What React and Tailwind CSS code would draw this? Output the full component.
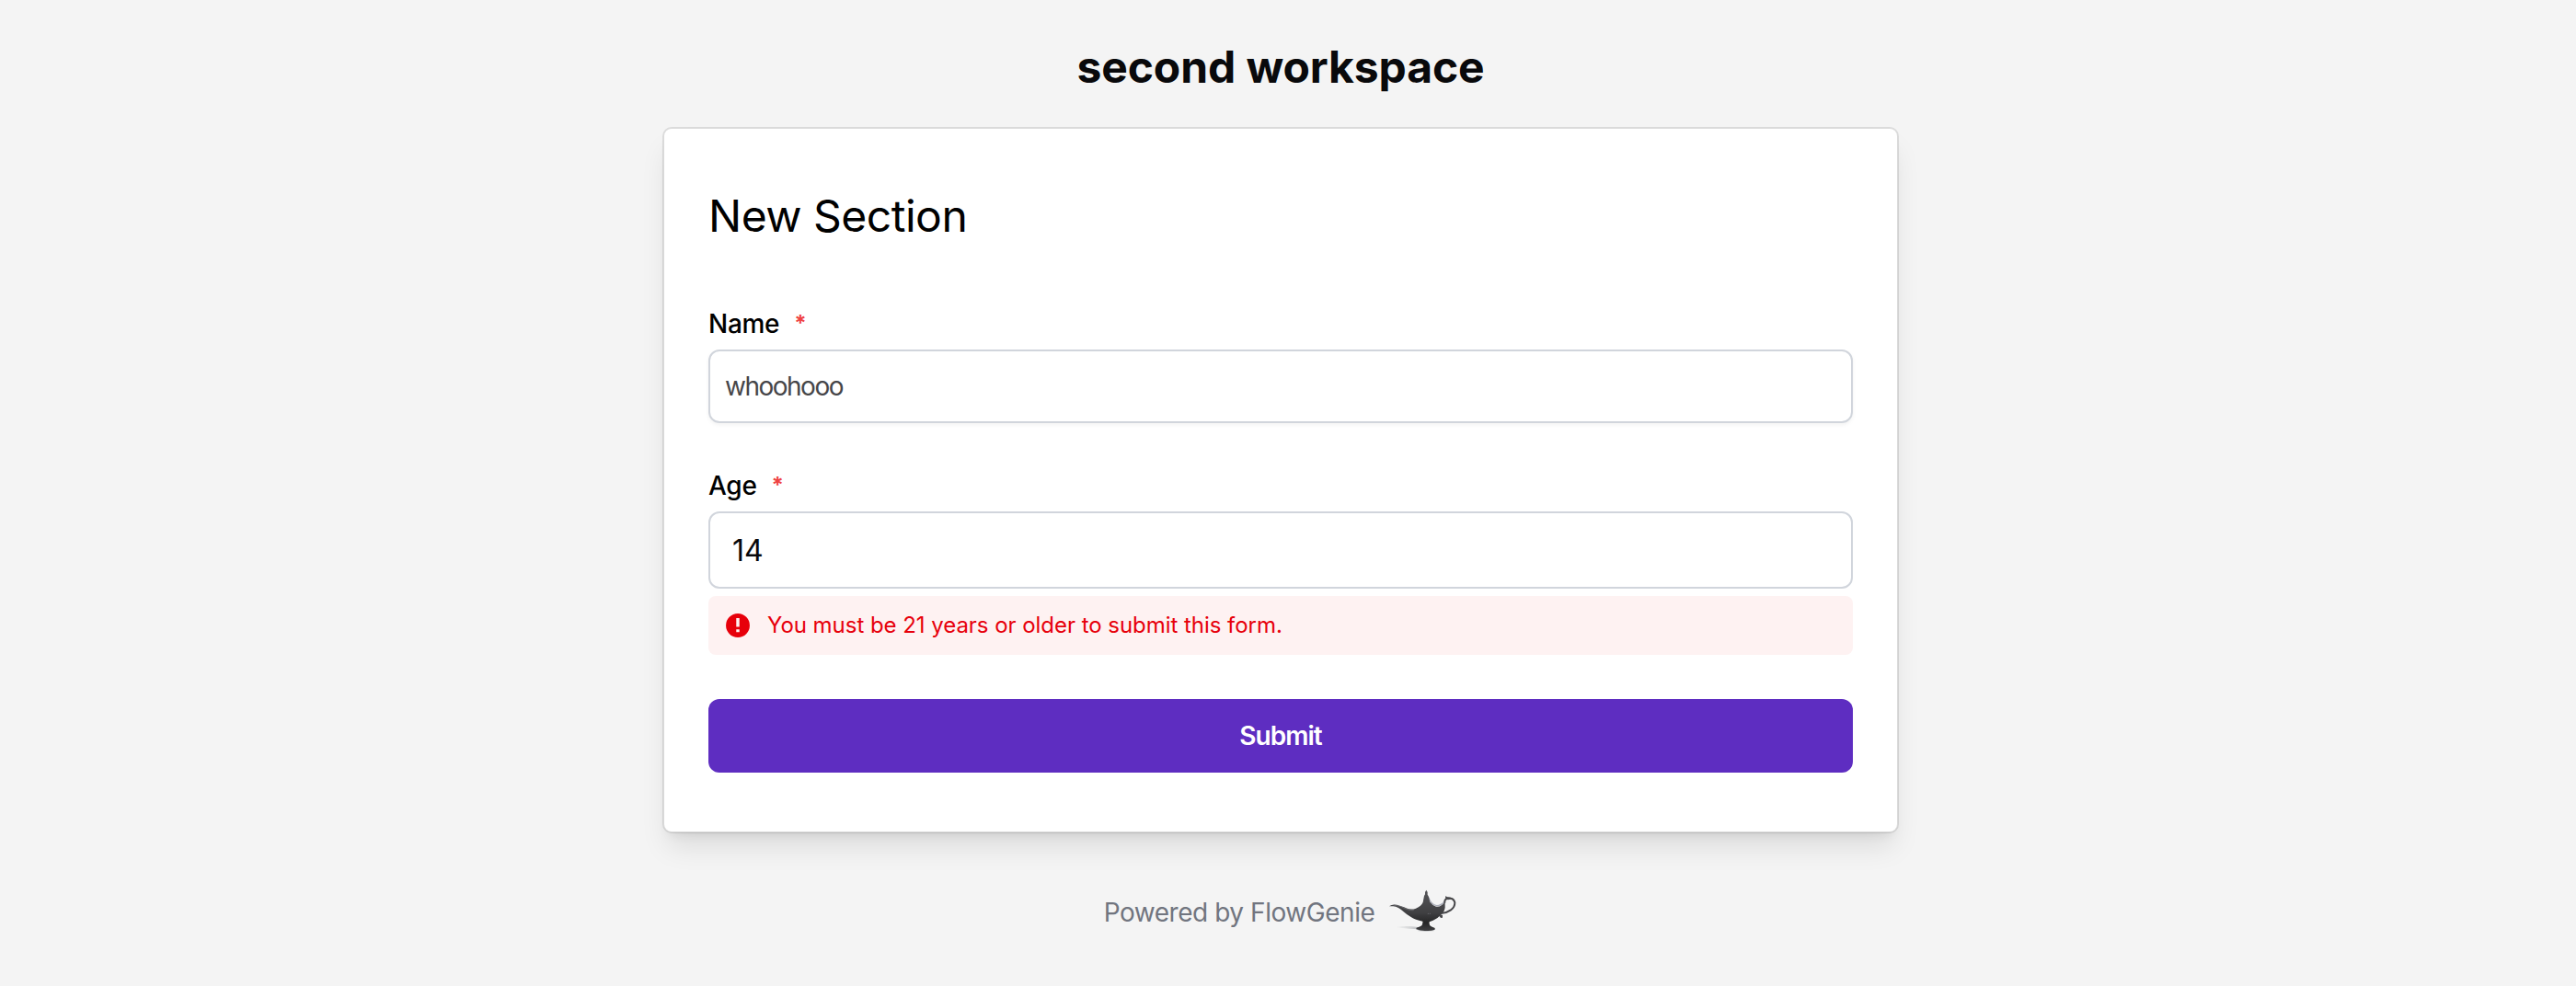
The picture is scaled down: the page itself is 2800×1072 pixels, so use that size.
// src/App.jsx
import React from 'react';

const LampLogo = () => (
  <svg className="h-12 w-[76px] shrink-0" viewBox="60 54 228 144" fill="none" aria-hidden="true">
    <defs>
      <linearGradient id="lampBody" x1="0" y1="60" x2="0" y2="192" gradientUnits="userSpaceOnUse">
        <stop offset="0" stopColor="#555558" />
        <stop offset="0.55" stopColor="#404042" />
        <stop offset="0.8" stopColor="#262627" />
        <stop offset="1" stopColor="#404042" />
      </linearGradient>
      <linearGradient id="lampShade" x1="88" y1="0" x2="165" y2="0" gradientUnits="userSpaceOnUse">
        <stop offset="0" stopColor="#c4c6c8" stopOpacity="0" />
        <stop offset="1" stopColor="#b9bbbe" />
      </linearGradient>
    </defs>
    <path d="M86 180 Q120 174 160 180 L160 187 Q118 185 86 180Z" fill="url(#lampShade)" />
    <ellipse cx="186" cy="191" rx="27" ry="3" fill="#c8cacc" />
    {/* chain between the lid and the handle */}
    <path d="M194 82 Q202 107 221 110 Q237 109 245 97" stroke="#a7aab6" strokeWidth="4" />
    {/* handle */}
    <path
      d="M247 99 Q246 88 257 87 Q276 83 280 100 Q280 116 267 124 Q254 133 239 134"
      stroke="#48484b"
      strokeWidth="6"
      strokeLinecap="round"
    />
    <path d="M250 87 L249 79 L257 82 Q268 81 272 88 L258 91Z" fill="#48484b" />
    <path d="M229 137 L240 141 L240 149 L234 150 L229 144Z" fill="#48484b" />
    {/* body, spout and foot */}
    <path
      d="M66 112 Q75 104 91 107 Q105 111 121 118 Q137 125 153 119 Q171 111 176 99 L180 78 L183 73 L183 66 L187 59 L191 66 L191 74 L194 79 L199 98 Q206 108 219 113 Q235 116 248 97 L248 116 Q246 131 235 139 Q226 151 209 158 L197 163 Q195 174 203 178 L215 183 L215 188 Q202 193 187 192 Q170 193 154 187 L155 182 L167 178 Q177 173 175 161 Q151 156 137 147 Q122 138 112 129 Q96 114 79 112Z"
      fill="url(#lampBody)"
    />
    <path d="M80 108 Q105 110 122 121 Q135 127 146 125" stroke="#77777b" strokeWidth="2" />
    <circle cx="193" cy="136" r="1.5" fill="#77777b" />
    <circle cx="199" cy="136" r="1.5" fill="#77777b" />
  </svg>
);

const FieldLabel = ({ htmlFor, children }) => (
  <label htmlFor={htmlFor} className="flex h-7 items-center text-[28px] leading-7 font-medium text-black">
    <span className="tracking-[-0.3px]">{children}</span>
    <span className="ml-4 text-2xl leading-7 font-bold text-[#ef4444]">*</span>
  </label>
);

const App = () => {
  return (
    <div className="min-h-screen bg-[#f4f4f4] pr-4 font-['Inter',sans-serif]">
      <div className="mx-auto flex w-[1344px] flex-col items-center pt-10">
        <h1 className="text-5xl leading-[66px] font-bold tracking-[-0.1px] text-[#09090b]">second workspace</h1>

        <form className="mt-8 h-[768px] w-full rounded-[10px] border-2 border-black/10 bg-white bg-clip-padding px-12 pt-16 shadow-[0_20px_30px_-6px_rgb(0_0_0/0.1),0_8px_12px_-8px_rgb(0_0_0/0.1)]">
          <h2 className="h-16 text-5xl leading-[61px] font-normal tracking-[-0.5px] text-black">New Section</h2>

          <div className="mt-[70px]">
            <FieldLabel htmlFor="name">Name</FieldLabel>
            <input
              id="name"
              defaultValue="whoohooo"
              className="mt-[14px] block h-20 w-full rounded-xl border-2 border-gray-300 px-4 text-[28px] tracking-[-1.5px] text-[#464649] shadow-[0_2px_4px_rgb(0_0_0/0.05)] outline-none"
            />
          </div>

          <div className="mt-[54px]">
            <FieldLabel htmlFor="age">Age</FieldLabel>
            <input
              id="age"
              defaultValue="14"
              className="mt-[14px] block h-[84px] w-full rounded-xl border-2 border-gray-300 px-6 text-[32px] text-[#09090b] outline-none"
            />
            <div className="mt-2 flex h-16 items-center rounded-lg bg-[#fef2f2] px-4 text-[#e7000b]">
              <svg className="size-8" viewBox="0 0 24 24" fill="currentColor" aria-hidden="true">
                <path d="M12 2.3a9.7 9.7 0 1 0 0 19.4 9.7 9.7 0 0 0 0-19.4zM13.3 17.5h-2.6v-2.4h2.6v2.4zm0-4.3h-2.6V6h2.6v7.2z" />
              </svg>
              <span className="ml-4 text-2xl leading-8 tracking-[-0.04px]">You must be 21 years or older to submit this form.</span>
            </div>
          </div>

          <button
            type="button"
            className="mt-12 flex h-20 w-full items-center justify-center rounded-xl bg-[#5e2dc1] text-[28px] font-semibold tracking-[-1px] text-white"
          >
            Submit
          </button>
        </form>

        <div className="mt-[60px] flex items-center">
          <span className="pt-[3px] text-[28px] leading-10 tracking-[-0.45px] text-[#71757f]">Powered by FlowGenie</span>
          <span className="ml-[14px]">
            <LampLogo />
          </span>
        </div>
      </div>
    </div>
  );
};

export default App;
